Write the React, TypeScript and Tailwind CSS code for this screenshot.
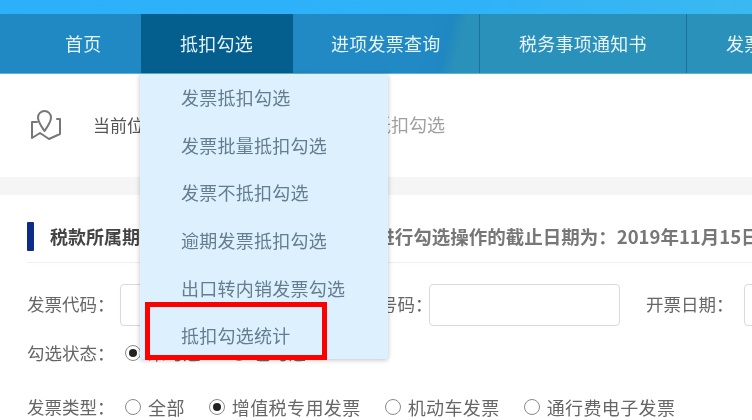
const C = "\uFF1A";

const navItems = [
  { label: "首页", className: "w-[141px] pl-[65px]" },
  { label: "抵扣勾选", className: "w-[152px] pl-[39px] bg-[#045f8e]" },
  { label: "进项发票查询", className: "w-[187px] pl-[38px] border-r border-[#19719f]" },
  { label: "税务事项通知书", className: "w-[207px] pl-[39px] border-r border-[#19719f]" },
  { label: "发票统计", className: "w-[152px] pl-[39px]" },
];

const menuItems = ["发票抵扣勾选", "发票批量抵扣勾选", "发票不抵扣勾选", "逾期发票抵扣勾选", "出口转内销发票勾选", "抵扣勾选统计"];

function Radio({ checked, label, className }: { checked?: boolean; label: string; className?: string }) {
  return (
    <label className={"flex shrink-0 items-center gap-[7px] " + (className ?? "")}>
      <span className="flex h-[16px] w-[16px] shrink-0 items-center justify-center rounded-full border border-[#8a8a8a] bg-white">
        {checked && <span className="h-[8px] w-[8px] rounded-full bg-[#222]" />}
      </span>
      <span>{label}</span>
    </label>
  );
}

function MapIcon() {
  return (
    <svg width="32" height="32" viewBox="0 0 32 32" fill="none" stroke="#777" strokeWidth="2" strokeLinejoin="round" strokeLinecap="round">
      <path d="M15.500 22C12 17 9 13 9 8.500a6.500 6.500 0 0 1 13 0C22 13 19 17 15.500 22z" />
      <path d="M8 13H3v16l8-5 9 6 11-5V10h-3" />
    </svg>
  );
}

export default function App() {
  return (
    <div
      className="relative h-[420px] w-[752px] overflow-hidden bg-white text-[17.5px] text-[#666] blur-[0.6px]"
      style={{ fontFamily: '"Noto Sans CJK SC", "Noto Sans", sans-serif' }}
    >
      <div className="h-[14px] bg-[linear-gradient(100deg,#2cb0f8_0%,#2eb2f8_60%,#3ab9f0_100%)]" />

      <nav className="flex h-[60px] overflow-hidden border-b border-[#5db3dc] bg-[linear-gradient(105deg,#2088c3_0%,#2189c4_56%,#1f87c1_59%,#2a91bb_61%,#2a91bb_100%)] text-[18px] tracking-[0.25px] text-[#e8f3f9]">
        {navItems.map((item) => (
          <div key={item.label} className={"flex shrink-0 items-center whitespace-nowrap " + item.className}>
            {item.label}
          </div>
        ))}
      </nav>

      <div className="flex h-[103px] items-center pl-[29px] pb-[2px] whitespace-nowrap">
        <MapIcon />
        <span className="ml-[32px] text-[17px] text-[#555]">当前位置{C}</span>
        <span className="ml-[15px] text-[18px] text-[#a0a0a0]">首页 &gt; 抵扣勾选 &gt; 发票抵扣勾选</span>
      </div>

      <div className="h-[18px] bg-[#f5f5f5]" />

      <section className="pl-[27px] pt-[27px]">
        <div className="flex items-start border-b border-[#f3eeee] pb-[11px]">
          <div className="h-[29px] w-[7px] shrink-0 rounded-[1px] bg-[#0d2c8a]" />
          <div className="flex h-[29px] items-center whitespace-nowrap pl-[16px] font-bold">
            <span className="text-[18px] text-[#444]">税款所属期{C}2019年10月</span>
            <span className="ml-[100px] text-[18.5px] text-[#777]">可进行勾选操作的截止日期为{C}2019年11月15日</span>
          </div>
        </div>

        <div className="mt-[21px] flex h-[42px] items-center whitespace-nowrap">
          <span className="w-[93px] shrink-0 pb-[2px]">发票代码{C}</span>
          <div className="h-[42px] w-[200px] shrink-0 rounded-[4px] border border-[#ddd8dc]" />
          <span className="ml-[25px] w-[84px] shrink-0 pb-[2px]">发票号码{C}</span>
          <div className="h-[42px] w-[191px] shrink-0 rounded-[4px] border border-[#ddd8dc]" />
          <span className="ml-[26px] w-[98px] shrink-0 pb-[2px]">开票日期{C}</span>
          <div className="h-[42px] w-[100px] shrink-0 rounded-[4px] border border-[#ddd8dc]" />
        </div>

        <div className="mt-[15px] flex h-[24px] items-center whitespace-nowrap">
          <span className="w-[98px] shrink-0">勾选状态{C}</span>
          <Radio checked label="未勾选" />
          <Radio label="已勾选" className="ml-[30px]" />
        </div>

        <div className="mt-[30px] flex h-[24px] items-center whitespace-nowrap text-[18px] tracking-[0.4px]">
          <span className="w-[98px] shrink-0 text-[17.5px] tracking-normal">发票类型{C}</span>
          <Radio label="全部" />
          <Radio checked label="增值税专用发票" className="ml-[24px]" />
          <Radio label="机动车发票" className="ml-[24px]" />
          <Radio label="通行费电子发票" className="ml-[24px]" />
        </div>
      </section>

      <div className="absolute left-[140px] top-[74px] h-[285px] w-[248px] rounded-b-[3px] bg-[#dcf0fe] text-[18px] tracking-[0.25px] text-[#647d8f] shadow-[0_1px_5px_rgba(0,0,0,0.25)]">
        {menuItems.map((item) => (
          <div key={item} className="flex h-[47.6px] items-center whitespace-nowrap pl-[41px]">
            {item}
          </div>
        ))}
        <div className="absolute left-[5px] top-[228px] h-[58px] w-[182px] border-[5px] border-[#ff0000]" />
      </div>
    </div>
  );
}
